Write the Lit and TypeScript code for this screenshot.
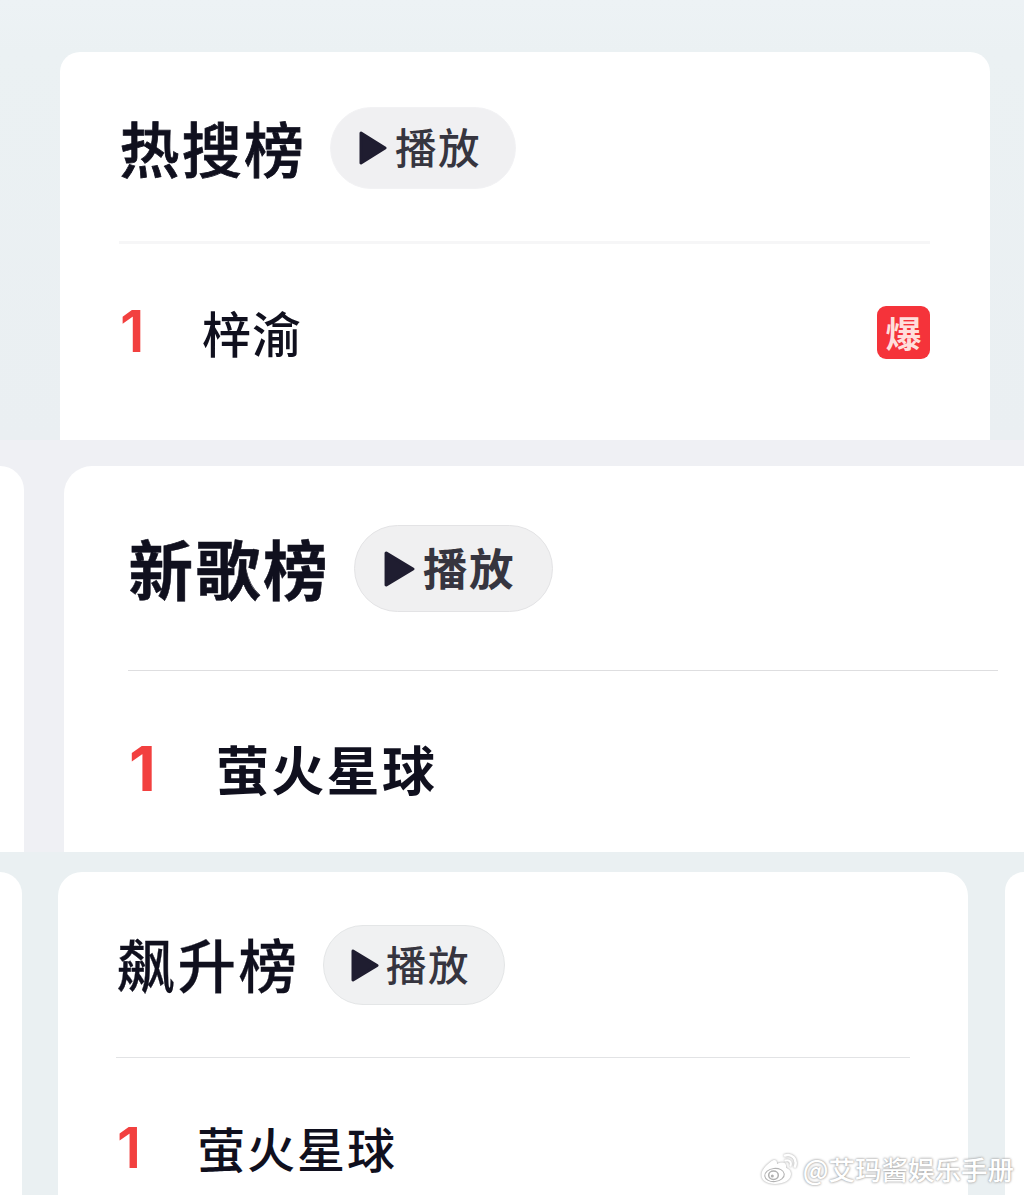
import { LitElement, html, css } from "lit";
import { customElement, property } from "lit/decorators.js";

@customElement("chart-card")
class ChartCard extends LitElement {
  @property() heading = "";
  @property() song = "";
  @property() badge = "";

  static styles = css`
    :host {
      display: block;
      box-sizing: border-box;
      background: #fff;
      color: #10101e;
      font-family: "Noto Sans CJK SC", sans-serif;
      overflow: hidden;
    }
    .head {
      display: flex;
      align-items: center;
      height: var(--pill-h);
    }
    .title {
      box-sizing: border-box;
      margin: 0;
      width: var(--title-w);
      padding: 0 0 3px 0.5px;
      flex: none;
      font-size: var(--title-size);
      letter-spacing: var(--title-track);
      font-weight: var(--weight);
      line-height: 1;
      white-space: nowrap;
      -webkit-text-stroke: var(--title-stroke) currentColor;
    }
    .play {
      display: flex;
      align-items: center;
      box-sizing: border-box;
      width: var(--pill-w);
      height: var(--pill-h);
      flex: none;
      padding: 0 0 0 var(--pill-pad);
      border: 1px solid var(--pill-border);
      border-radius: 50px;
      background: var(--pill-bg);
      color: #36353f;
      font-family: inherit;
      font-size: var(--play-size);
      letter-spacing: 1.5px;
      font-weight: var(--weight);
      line-height: 1;
      white-space: nowrap;
    }
    .tri {
      width: var(--tri-w);
      height: var(--tri-h);
      flex: none;
      margin-right: var(--tri-gap);
      fill: #1f1d30;
      stroke: #1f1d30;
    }
    .play-text {
      padding-bottom: 2px;
    }
    .rule {
      height: var(--rule-h, 1px);
      margin-top: var(--rule-top);
      background: var(--rule);
    }
    .row {
      display: flex;
      align-items: center;
      height: 60px;
      margin-top: var(--row-top);
    }
    .rank {
      box-sizing: border-box;
      width: var(--rank-w);
      padding: 0 0 2px 1px;
      flex: none;
      color: #f2403f;
      font-family: Inter, sans-serif;
      font-size: var(--rank-size);
      font-weight: var(--rank-weight);
      line-height: 1;
    }
    .song {
      flex: 1;
      font-size: var(--song-size);
      letter-spacing: var(--song-track);
      font-weight: var(--weight);
      line-height: 1;
      white-space: nowrap;
      padding-bottom: var(--song-lift);
    }
    .badge {
      display: flex;
      align-items: center;
      justify-content: center;
      box-sizing: border-box;
      width: 53px;
      height: 53px;
      padding-bottom: 1px;
      border-radius: 9px;
      background: #f5333a;
      color: #ffdfdc;
      font-size: 36px;
      font-weight: 700;
      line-height: 1;
    }
  `;

  render() {
    return html`
      <div class="head">
        <h2 class="title">${this.heading}</h2>
        <button class="play">
          <svg class="tri" viewBox="0 0 28 34" preserveAspectRatio="none">
            <path d="M2 2 L26 17 L2 32 Z" stroke-width="3" stroke-linejoin="round" />
          </svg>
          <span class="play-text">播放</span>
        </button>
      </div>
      <div class="rule"></div>
      <div class="row">
        <span class="rank">1</span>
        <span class="song">${this.song}</span>
        ${this.badge ? html`<span class="badge">${this.badge}</span>` : ""}
      </div>
    `;
  }
}

@customElement("app-root")
class AppRoot extends LitElement {
  static styles = css`
    :host {
      display: block;
      position: relative;
      width: 1024px;
      height: 1195px;
      overflow: hidden;
    }
    .panel {
      display: flex;
      box-sizing: border-box;
      width: 1024px;
      overflow: hidden;
    }
    .hot {
      height: 440px;
      padding: 52px 35px 0 60px;
      background: linear-gradient(180deg, #edf2f5 0, #ebf1f3 52px, #eaeff2 100%);
    }
    .fresh {
      height: 412px;
      padding-top: 26px;
      background: #eff0f4;
    }
    .rising {
      height: 343px;
      padding-top: 20px;
      background: #eaf0f2;
    }
    .edge {
      flex: none;
      background: #fff;
    }
    .fresh .edge {
      width: 24px;
      margin-right: 40px;
      border-radius: 0 26px 0 0;
    }
    .rising .left {
      width: 22px;
      margin-right: 36px;
      border-radius: 0 24px 0 0;
    }
    .rising .right {
      width: 19px;
      margin-left: 37px;
      border-radius: 24px 0 0 0;
    }
    chart-card {
      flex: none;
    }
    .card-hot {
      width: 930px;
      padding: 55px 60px 0 59px;
      border-radius: 20px 20px 0 0;
      --weight: 500;
      --title-w: 211px;
      --title-size: 60px;
      --title-track: 2.2px;
      --title-stroke: 0.8px;
      --pill-w: 186px;
      --pill-h: 82px;
      --pill-pad: 28px;
      --pill-bg: #f0f0f2;
      --pill-border: #f2f2f4;
      --play-size: 41.5px;
      --tri-w: 28px;
      --tri-h: 34px;
      --tri-gap: 8px;
      --rule: #f6f6f7;
      --rule-h: 3px;
      --rule-top: 52px;
      --row-top: 58px;
      --rank-w: 83px;
      --rank-size: 58px;
      --rank-weight: 600;
      --song-size: 49px;
      --song-track: 1px;
      --song-lift: 2px;
    }
    .card-fresh {
      width: 960px;
      padding: 59px 26px 0 64px;
      border-radius: 28px 0 0 0;
      --weight: 700;
      --title-w: 226px;
      --title-size: 64.5px;
      --title-track: 2.7px;
      --title-stroke: 0.5px;
      --pill-w: 199px;
      --pill-h: 87px;
      --pill-pad: 29px;
      --pill-bg: #f0f0f1;
      --pill-border: #e3e3e5;
      --play-size: 44.5px;
      --tri-w: 31px;
      --tri-h: 36px;
      --tri-gap: 8px;
      --rule: #dedee0;
      --rule-top: 58px;
      --row-top: 69px;
      --rank-w: 88px;
      --rank-size: 62px;
      --rank-weight: 700;
      --song-size: 53px;
      --song-track: 2.3px;
      --song-lift: 4px;
    }
    .card-rising {
      width: 910px;
      padding: 53px 58px 0 58px;
      border-radius: 24px 24px 0 0;
      --weight: 500;
      --title-w: 207px;
      --title-size: 58.5px;
      --title-track: 2.5px;
      --title-stroke: 0.3px;
      --pill-w: 182px;
      --pill-h: 80px;
      --pill-pad: 27px;
      --pill-bg: #f0f1f2;
      --pill-border: #e4e6e7;
      --play-size: 40.5px;
      --tri-w: 28px;
      --tri-h: 33px;
      --tri-gap: 7px;
      --rule: #e2e3e5;
      --rule-top: 52px;
      --row-top: 60px;
      --rank-w: 81px;
      --rank-size: 57px;
      --rank-weight: 600;
      --song-size: 48px;
      --song-track: 2px;
      --song-lift: 2px;
    }
    .mark {
      position: absolute;
      right: 10px;
      bottom: 9px;
      display: flex;
      align-items: center;
      gap: 5px;
      color: #fff;
      font-family: "Noto Sans CJK SC", sans-serif;
      font-size: 26.5px;
      font-weight: 500;
      line-height: 34px;
      white-space: nowrap;
      text-shadow: 0 0 2px #9c9c9c, 0 0 3px #b4b4b4;
    }
    .logo {
      width: 38px;
      height: 33px;
      filter: drop-shadow(0 0 1px #999);
    }
  `;

  render() {
    return html`
      <section class="panel hot">
        <chart-card class="card-hot" heading="热搜榜" song="梓渝" badge="爆"></chart-card>
      </section>
      <section class="panel fresh">
        <div class="edge"></div>
        <chart-card class="card-fresh" heading="新歌榜" song="萤火星球"></chart-card>
      </section>
      <section class="panel rising">
        <div class="edge left"></div>
        <chart-card class="card-rising" heading="飙升榜" song="萤火星球"></chart-card>
        <div class="edge right"></div>
      </section>
      <div class="mark">
        <svg class="logo" viewBox="0 0 38 33" fill="none">
          <path
            d="M11 8.5 C14 6 17.5 6.5 17 11 C21 8.5 27 9 26 14 C25.5 15.5 31 15.5 31 21 C31 27.5 23 31 15 31 C7 31 1.5 27.5 1.5 22 C1.5 17 6 12 11 8.5 Z"
            fill="#fff"
          />
          <ellipse cx="14.5" cy="22" rx="9.8" ry="6.6" stroke="#b4b4b4" stroke-width="1.1" transform="rotate(-6 14.5 22)" />
          <ellipse cx="13.5" cy="22.2" rx="4.8" ry="4.2" stroke="#b0b0b0" stroke-width="1.5" />
          <circle cx="12.3" cy="23" r="1.5" fill="#b0b0b0" />
          <path d="M25 2.5 C32 0.5 37.5 6 35 13.5" stroke="#fff" stroke-width="2.6" stroke-linecap="round" />
          <path d="M25.5 7.5 C29 6.5 31.8 9 30.5 12.5" stroke="#fff" stroke-width="2.2" stroke-linecap="round" />
        </svg>
        <span>@艾玛酱娱乐手册</span>
      </div>
    `;
  }
}
